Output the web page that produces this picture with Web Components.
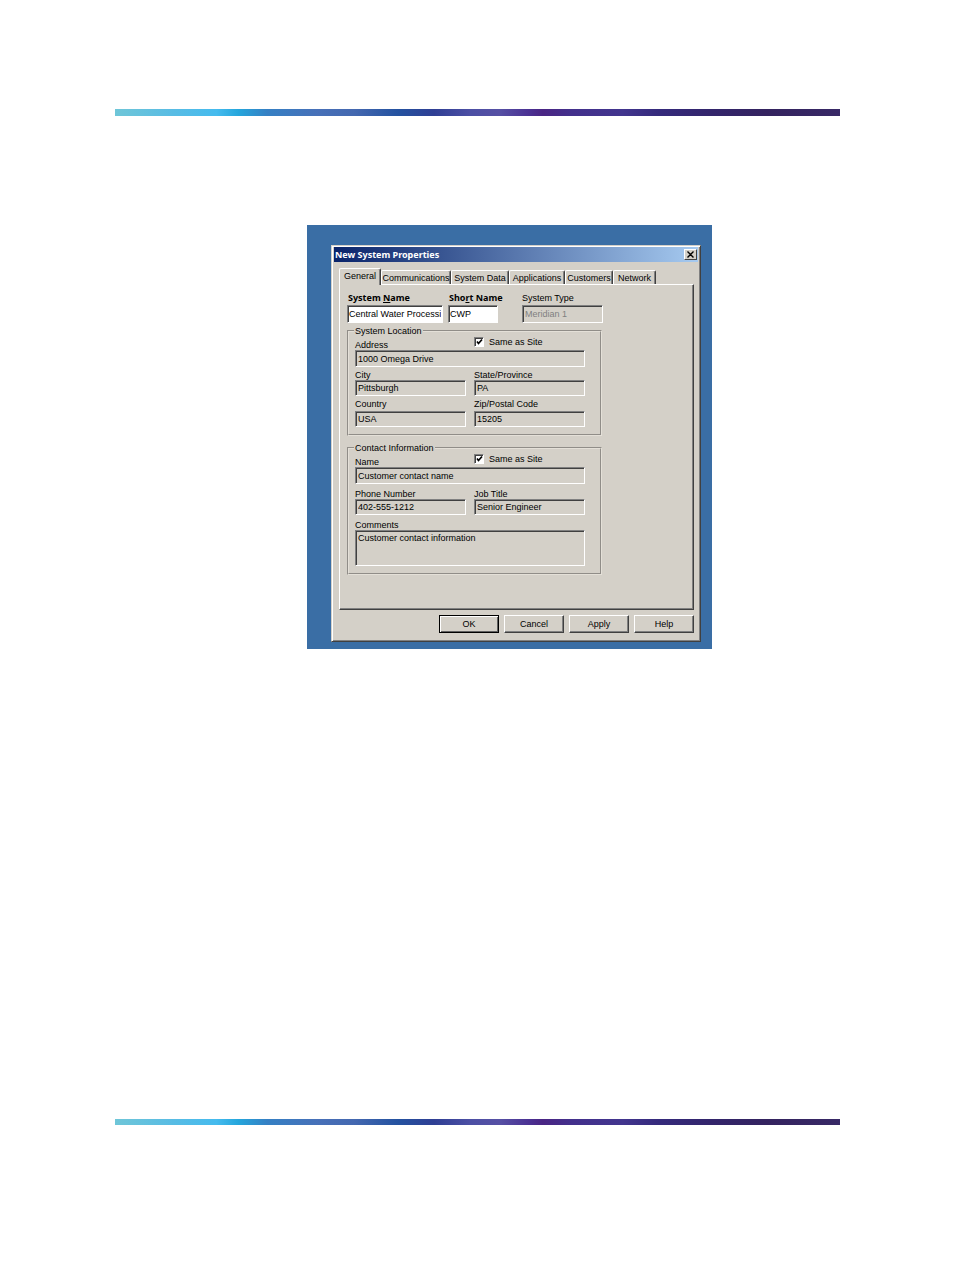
<!DOCTYPE html>
<html lang="en">
<head>
<meta charset="utf-8">
<title>New System Properties</title>
<style>
  body {
    margin: 0;
    background: #fff;
    color: #000;
    font: 9px/10px "Liberation Sans", Arial, sans-serif;
  }
</style>
</head>
<body>
<manual-page>
  <desktop-figure>
    <win-dialog heading="New System Properties">
      <win-tabs slot="tabs"></win-tabs>
      <win-general></win-general>
      <win-button slot="actions" primary>OK</win-button>
      <win-button slot="actions">Cancel</win-button>
      <win-button slot="actions">Apply</win-button>
      <win-button slot="actions">Help</win-button>
    </win-dialog>
  </desktop-figure>
</manual-page>
<script>
class Base extends HTMLElement {
  constructor() {
    super();
    this.attachShadow({ mode: "open" });
  }
  connectedCallback() {
    this.shadowRoot.innerHTML = "<style>*{box-sizing:border-box}</style>" + this.render();
  }
}

customElements.define("gradient-rule", class extends Base {
  render() {
    return `<style>
      :host { display: block; height: 7px;
        background: linear-gradient(90deg, #6fc6d8 0, #58bce4 8%, #45bbee 14%, #25a6dc 17%, #3580c4 21%, #4770b8 28%, #4468b0 33%, #2452a0 39%, #2f3f94 44%, #4c4fa4 49%, #5650a4 53%, #4b3294 57%, #4a2584 59%, #43308c 63%, #42358e 70%, #352a7c 75%, #33256c 82%, #34235f 90%, #382966 100%); }
      :host([thin]) { height: 6px; }
    </style>`;
  }
});

customElements.define("manual-page", class extends Base {
  render() {
    return `<style>
      :host { display: flex; flex-direction: column; min-height: 100vh; padding: 109px 114px 147px 115px; box-sizing: border-box; }
      main { flex: 1; padding: 109px 128px 0 192px; }
    </style>
    <gradient-rule></gradient-rule><main><slot></slot></main><gradient-rule thin></gradient-rule>`;
  }
});

customElements.define("desktop-figure", class extends Base {
  render() {
    return `<style>
      :host { display: block; background: #3a6ea5; padding: 20px 11px 7px 24px; }
    </style><slot></slot>`;
  }
});

customElements.define("win-dialog", class extends Base {
  render() {
    return `<style>
      :host { display: block; background: #d4d0c8; border: 1px solid; border-color: #d4d0c8 #404040 #404040 #d4d0c8;
        box-shadow: inset 1px 1px #fff, inset -1px -1px #808080; padding: 1px 2px 8px; }
      header { display: flex; align-items: center; justify-content: space-between; height: 15px; padding: 0 1px;
        background: linear-gradient(90deg, #0a246a, #a6caf0); }
      h1 { margin: 0; color: #fff; font: bold 9px/15px "Noto Sans", sans-serif; }
      header button { width: 13px; height: 11px; padding: 0; display: grid; place-items: center; background: #d4d0c8;
        border: 1px solid; border-color: #fff #404040 #404040 #fff; }
      svg { display: block; }
      section { padding: 6px 4px 5px 5px; }
      footer { display: flex; justify-content: flex-end; gap: 5px; padding-right: 4px; }
    </style>
    <header><h1>${this.getAttribute("heading")}</h1>
      <button aria-label="Close"><svg width="7" height="7" viewBox="0 0 7 7"><path d="M0.500 0.500L6.500 6.500M6.500 0.500L0.500 6.500" stroke="#000" stroke-width="1.400"/></svg></button>
    </header>
    <section><slot name="tabs"></slot><slot></slot></section>
    <footer><slot name="actions"></slot></footer>`;
  }
});

customElements.define("win-tabs", class extends Base {
  render() {
    const names = ["General", "Communications", "System Data", "Applications", "Customers", "Network"];
    return `<style>
      :host { display: block; }
      div { display: grid; grid-template-columns: 42px 70px 58px 56px 48px 43px; align-items: end; height: 16px; }
      button { font: inherit; color: inherit; height: 14px; padding: 1px 0 0; background: #d4d0c8; border: 1px solid; white-space: nowrap;
        border-color: #fff #404040 transparent #fff; border-bottom: 0; border-radius: 2px 2px 0 0; box-shadow: inset -1px 0 #808080; }
      button[aria-selected=true] { position: relative; height: 17px; margin-bottom: -1px; padding: 0 0 2px; }
    </style>
    <div role="tablist">${names.map((n, i) => `<button role="tab" aria-selected="${i === 0}">${n}</button>`).join("")}</div>`;
  }
});

customElements.define("win-field", class extends Base {
  render() {
    const v = this.getAttribute("value");
    const off = this.hasAttribute("disabled") ? "disabled" : this.hasAttribute("editable") ? "" : "readonly";
    return `<style>
      :host { display: block; min-width: 0; }
      label { display: block; white-space: nowrap; }
      :host([strong]) label { font: bold 9px/10px "Noto Sans", sans-serif; padding-left: 1px; }
      :host([spaced]) label { padding-bottom: 2px; }
      input, textarea { display: block; width: 100%; height: 16px; margin: 0; padding: 0 2px; font: inherit; line-height: 12px; color: #000;
        background: #d4d0c8; border: 1px solid; border-color: #808080 #fff #fff #808080; box-shadow: inset 1px 1px #404040; border-radius: 0; outline: 0; resize: none; overflow: hidden; }
      textarea { height: 36px; padding: 1px 2px; }
      :host([wide]) input { height: 17px; }
      :host([editable]) input { background: #fff; height: 18px; padding: 0 1px; }
      :host([disabled]) input { color: #808080; height: 18px; }
    </style>
    <label for="f"><slot></slot></label>
    ${this.hasAttribute("multiline") ? `<textarea id="f" ${off}>${v}</textarea>` : `<input id="f" value="${v}" ${off}>`}`;
  }
});

customElements.define("win-check", class extends Base {
  render() {
    return `<style>
      :host { display: block; }
      label { display: flex; align-items: center; gap: 5px; height: 11px; }
      input { appearance: none; width: 10px; height: 10px; margin: 0; background: #fff; border: 1px solid; border-color: #808080 #fff #fff #808080; box-shadow: inset 1px 1px #404040; }
      span { display: grid; } span > * { grid-area: 1 / 1; }
      svg { display: none; z-index: 1; pointer-events: none; }
      input:checked + svg { display: block; }
    </style>
    <label><span><input type="checkbox" checked><svg width="10" height="10" viewBox="0 0 10 10"><path d="M3 4.500L4.500 6.500L8 2.500" fill="none" stroke="#000" stroke-width="1.700"/></svg></span><slot></slot></label>`;
  }
});

customElements.define("win-group", class extends Base {
  render() {
    return `<style>
      :host { display: block; }
      fieldset { margin: 0; min-width: 0; padding: 0 15px 7px 6px; border: 2px groove #e4e0d8; }
      legend { padding: 0 1px; margin-left: -1px; height: 10px; }
      div { display: grid; grid-template-columns: 1fr 1fr; column-gap: 8px; row-gap: var(--row-gap, 3px); align-items: start; }
    </style>
    <fieldset><legend>${this.getAttribute("heading")}</legend><div><slot></slot></div></fieldset>`;
  }
});

customElements.define("win-general", class extends Base {
  render() {
    return `<style>
      :host { display: block; border: 1px solid; border-color: #fff #404040 #404040 #fff; box-shadow: inset -1px -1px #808080;
        padding: 8px 91px 34px 7px; }
      .top { display: grid; grid-template-columns: 96px 50px 81px; column-gap: 5px; margin-bottom: 3px; }
      .top win-field:last-child { margin-left: 19px; margin-right: -19px; }
      win-field[wide] { grid-column: 1 / 3; }
      win-field.first { grid-row: 1; padding-top: 4px; }
      win-check { grid-column: 2; grid-row: 1; z-index: 1; }
      win-group + win-group { --row-gap: 5px; margin-top: 7px; }
    </style>
    <div class="top">
      <win-field strong spaced editable value="Central Water Processing">System <u>N</u>ame</win-field>
      <win-field strong spaced editable value="CWP">Sho<u>r</u>t Name</win-field>
      <win-field spaced disabled value="Meridian 1">System Type</win-field>
    </div>
    <win-group heading="System Location">
      <win-field class="first" wide value="1000 Omega Drive">Address</win-field>
      <win-check>Same as Site</win-check>
      <win-field value="Pittsburgh">City</win-field>
      <win-field value="PA">State/Province</win-field>
      <win-field spaced value="USA">Country</win-field>
      <win-field spaced value="15205">Zip/Postal Code</win-field>
    </win-group>
    <win-group heading="Contact Information">
      <win-field class="first" wide value="Customer contact name">Name</win-field>
      <win-check>Same as Site</win-check>
      <win-field value="402-555-1212">Phone Number</win-field>
      <win-field value="Senior Engineer">Job Title</win-field>
      <win-field wide multiline value="Customer contact information">Comments</win-field>
    </win-group>`;
  }
});

customElements.define("win-button", class extends Base {
  render() {
    return `<style>
      :host { display: block; width: 60px; }
      button { display: block; width: 100%; height: 18px; padding: 0; font: inherit; color: #000; background: #d4d0c8;
        border: 1px solid; border-color: #fff #404040 #404040 #fff; box-shadow: inset -1px -1px #808080; border-radius: 0; }
      :host([primary]) button { border-color: #000; box-shadow: inset 1px 1px #fff, inset -1px -1px #606060; }
    </style><button><slot></slot></button>`;
  }
});
</script>
</body>
</html>
